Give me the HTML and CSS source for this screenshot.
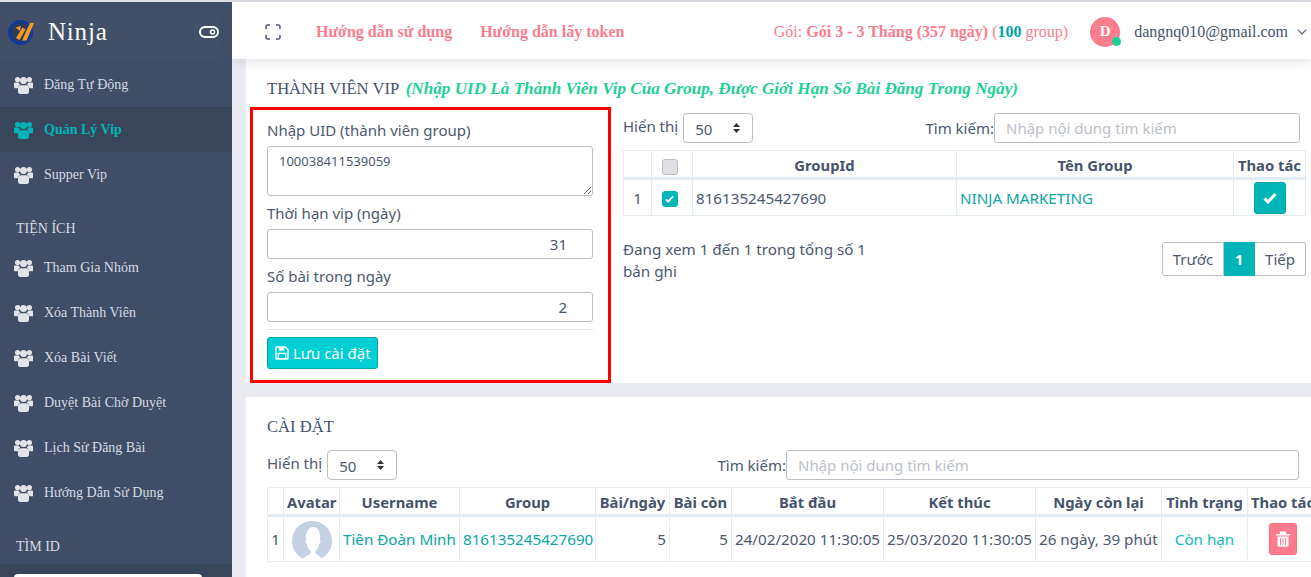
FILE: index.html
```html
<!DOCTYPE html>
<html lang="en">
<head>
    <meta charset="UTF-8">
    <meta name="viewport" content="width=device-width, initial-scale=1.0">
    <title>Ninja - Quản Lý Vip</title>
    <link rel="stylesheet" href="styles.css">
</head>
<body>
    <svg class="defs" width="0" height="0">
        <symbol id="users" viewBox="0 0 19 18">
            <circle cx="3.6" cy="3.6" r="2.6"/>
            <circle cx="15.4" cy="3.6" r="2.6"/>
            <circle cx="9.5" cy="4.4" r="3.5"/>
            <path d="M0 7.6c0-.7.6-1 1.3-1h3.4c.4.9 1 1.6 1.6 2.2-1.3.6-2.2 1.8-2.4 3.5H1.3C.5 12.300 0 11.800 0 11z"/>
            <path d="M19 7.600c0-.7-.6-1-1.300-1h-3.400c-.4.9-1 1.600-1.600 2.200 1.300.6 2.200 1.800 2.400 3.500h3.600c.8 0 1.300-.5 1.300-1.300z"/>
            <path d="M6.800 9.200h5.400c1.800 0 2.800 1.300 2.800 3.100v3.500c0 1.300-.9 2.200-2.200 2.200H6.200C4.900 18 4 17.100 4 15.800v-3.500c0-1.800 1-3.100 2.800-3.100z"/>
        </symbol>
        <symbol id="check" viewBox="0 0 14 12">
            <path d="M1.500 6.500 5 10l7.500-8" fill="none" stroke="currentColor" stroke-width="3"/>
        </symbol>
    </svg>

    <aside class="sidebar">
        <div class="brand">
            <svg class="logo" width="26" height="26" viewBox="0 0 26 26">
                <circle cx="12.500" cy="13.500" r="11" fill="#2c3a5c" stroke="#12389a" stroke-width="3"/>
                <path d="M8 19 14.500 8.500l3 2L11.500 21zM14 21.500 22 4h4l-7.500 17.500z" fill="#f59a23"/>
                <path d="M7.500 8.500l5.500-1.500-1 5z" fill="#f59a23"/>
            </svg>
            <span class="brand-name">Ninja</span>
            <svg class="toggle" width="20" height="14" viewBox="0 0 20 14">
                <rect x="1" y="2" width="18" height="10" rx="5" fill="none" stroke="#fff" stroke-width="2"/>
                <circle cx="13.500" cy="7" r="2" fill="none" stroke="#fff" stroke-width="1.600"/>
            </svg>
        </div>

        <a class="nav-item"><svg class="nav-icon"><use href="#users"/></svg>Đăng Tự Động</a>
        <a class="nav-item active"><svg class="nav-icon"><use href="#users"/></svg>Quản Lý Vip</a>
        <a class="nav-item"><svg class="nav-icon"><use href="#users"/></svg>Supper Vip</a>

        <div class="nav-title first">TIỆN ÍCH</div>
        <a class="nav-item"><svg class="nav-icon"><use href="#users"/></svg>Tham Gia Nhóm</a>
        <a class="nav-item"><svg class="nav-icon"><use href="#users"/></svg>Xóa Thành Viên</a>
        <a class="nav-item"><svg class="nav-icon"><use href="#users"/></svg>Xóa Bài Viết</a>
        <a class="nav-item"><svg class="nav-icon"><use href="#users"/></svg>Duyệt Bài Chờ Duyệt</a>
        <a class="nav-item"><svg class="nav-icon"><use href="#users"/></svg>Lịch Sử Đăng Bài</a>
        <a class="nav-item"><svg class="nav-icon"><use href="#users"/></svg>Hướng Dẫn Sử Dụng</a>

        <div class="nav-title">TÌM ID</div>
        <div class="find-box"><div class="find-input"></div></div>
    </aside>

    <div class="main">
        <header class="topbar">
            <svg class="fullscreen" width="16" height="16" viewBox="0 0 16 16">
                <path d="M1 5V2.500C1 1.600 1.600 1 2.500 1H5M11 1h2.500c.9 0 1.500.6 1.500 1.500V5M15 11v2.500c0 .9-.6 1.500-1.500 1.500H11M5 15H2.500C1.600 15 1 14.400 1 13.500V11" fill="none" stroke="#4a5870" stroke-width="1.500"/>
            </svg>
            <a class="top-link">Hướng dẫn sử dụng</a>
            <a class="top-link">Hướng dẫn lấy token</a>
            <div class="plan">Gói: <b>Gói 3 - 3 Tháng (357 ngày)</b> (<b class="plan-count">100</b> group)</div>
            <div class="avatar">D<span class="avatar-dot"></span></div>
            <div class="email">dangnq010@gmail.com</div>
            <svg class="chevron" width="10" height="6" viewBox="0 0 10 6">
                <path d="M.7.7 5 5 9.300.7" fill="none" stroke="#4a5870" stroke-width="1.100"/>
            </svg>
        </header>

        <section class="card card-vip">
            <h2 class="card-title">THÀNH VIÊN VIP <em>(Nhập UID Là Thành Viên Vip Của Group, Được Giới Hạn Số Bài Đăng Trong Ngày)</em></h2>
            <div class="vip-row">
                <form class="vip-form">
                    <label>Nhập UID (thành viên group)</label>
                    <textarea class="uid-input">100038411539059</textarea>
                    <label>Thời hạn vip (ngày)</label>
                    <input class="num-input" type="text" value="31">
                    <label>Số bài trong ngày</label>
                    <input class="num-input" type="text" value="2">
                    <hr>
                    <button class="save-btn" type="button">
                        <svg width="14" height="14" viewBox="0 0 15 15">
                            <path d="M2 1h9l3 3v9a1 1 0 0 1-1 1H2a1 1 0 0 1-1-1V2a1 1 0 0 1 1-1z" fill="none" stroke="#fff" stroke-width="1.500"/>
                            <path d="M4 1.500h6v3.500H4z" fill="#fff"/>
                            <path d="M3.500 8h8v5.500h-8z" fill="none" stroke="#fff" stroke-width="1.300"/>
                        </svg>
                        Lưu cài đặt
                    </button>
                </form>

                <div class="vip-list">
                    <div class="filter-row">
                        <label class="filter-label">Hiển thị</label>
                        <select class="page-size"><option>50</option></select>
                        <label class="search-label">Tìm kiếm:</label>
                        <input class="search vip-search" type="text" placeholder="Nhập nội dung tìm kiếm">
                    </div>
                    <table class="grid grid-groups">
                        <thead>
                            <tr>
                                <th class="g-no"></th>
                                <th class="g-check"><span class="checkbox"></span></th>
                                <th class="g-id">GroupId</th>
                                <th class="g-name">Tên Group</th>
                                <th class="g-act">Thao tác</th>
                            </tr>
                        </thead>
                        <tbody>
                            <tr>
                                <td class="center">1</td>
                                <td class="center"><span class="checkbox checked"><svg width="9" height="8"><use href="#check"/></svg></span></td>
                                <td>816135245427690</td>
                                <td><a class="link">NINJA MARKETING</a></td>
                                <td class="center"><span class="icon-btn teal"><svg width="14" height="12"><use href="#check"/></svg></span></td>
                            </tr>
                        </tbody>
                    </table>
                    <div class="list-foot">
                        <div class="info">Đang xem 1 đến 1 trong tổng số 1 bản ghi</div>
                        <div class="pager">
                            <a>Trước</a>
                            <a class="current">1</a>
                            <a>Tiếp</a>
                        </div>
                    </div>
                </div>
            </div>
        </section>

        <section class="card card-settings">
            <h2 class="card-title">CÀI ĐẶT</h2>
            <div class="filter-row">
                <label class="filter-label">Hiển thị</label>
                <select class="page-size"><option>50</option></select>
                <label class="search-label">Tìm kiếm:</label>
                <input class="search settings-search" type="text" placeholder="Nhập nội dung tìm kiếm">
            </div>
            <table class="grid grid-settings">
                <thead>
                    <tr>
                        <th class="s-no"></th>
                        <th class="s-avatar">Avatar</th>
                        <th class="s-user">Username</th>
                        <th class="s-group">Group</th>
                        <th class="s-day">Bài/ngày</th>
                        <th class="s-left">Bài còn</th>
                        <th class="s-start">Bắt đầu</th>
                        <th class="s-end">Kết thúc</th>
                        <th class="s-remain">Ngày còn lại</th>
                        <th class="s-state">Tình trạng</th>
                        <th class="s-act">Thao tác</th>
                    </tr>
                </thead>
                <tbody>
                    <tr>
                        <td class="center">1</td>
                        <td class="center">
                            <svg class="user-pic" width="40" height="37" viewBox="0 0 40 37">
                                <path d="M10 37C3.500 33 0 27 0 20 0 9 9 0 20 0s20 9 20 20c0 7-3.500 13-10 17z" fill="#c6d0e3"/>
                                <path d="M12 37c3-3 6-3 7-6-1-2-4-4-4-8-2-1-2-3-1-4-1-6 2-13 7-13 5-.5 8 6 7 13 1 1 1 3-1 4 0 4-3 6-4 8 1 3 4 3 6 6z" fill="#fff"/>
                            </svg>
                        </td>
                        <td class="nowrap"><a class="link">Tiên Đoàn Minh</a></td>
                        <td class="nowrap"><a class="link">816135245427690</a></td>
                        <td class="right">5</td>
                        <td class="right">5</td>
                        <td class="nowrap">24/02/2020 11:30:05</td>
                        <td class="nowrap">25/03/2020 11:30:05</td>
                        <td class="nowrap">26 ngày, 39 phút</td>
                        <td class="center state">Còn hạn</td>
                        <td class="center">
                            <span class="icon-btn pink">
                                <svg width="14" height="16" viewBox="0 0 14 16">
                                    <path d="M0 3h14v1.500H0zM4.500 3V1h5v2" fill="#fff"/>
                                    <path d="M4.500 3V1.200h5V3" fill="none" stroke="#fff" stroke-width="1.300"/>
                                    <path d="M1.500 5.500h11V14c0 1-.6 1.700-1.500 1.700H3c-.9 0-1.500-.7-1.500-1.700z" fill="#fff"/>
                                    <path d="M4.500 7v7M7 7v7M9.500 7v7" stroke="#fd7b8c"/>
                                </svg>
                            </span>
                        </td>
                    </tr>
                </tbody>
            </table>
        </section>
    </div>
</body>
</html>
```

FILE: styles.css
```css
* {
    box-sizing: border-box;
}
html, body {
    height: 577px;
    overflow: hidden;
}
body {
    margin: 0;
    padding-top: 2px;
    display: flex;
    background: #e9ebf0;
    font-family: "Noto Sans", "Open Sans", sans-serif;
    font-size: 15px;
    color: #4c5870;
    box-shadow: inset 0 2px 0 #dfe1e5;
}
.defs {
    position: absolute;
}

/* sidebar */
.sidebar {
    flex: 0 0 232px;
    height: 575px;
    background: #3f4d67;
    font-family: "Liberation Serif", serif;
    overflow: hidden;
}
.brand {
    height: 60px;
    display: flex;
    align-items: center;
    padding: 0 13px 0 8px;
    background: #414f69;
}
.brand-name {
    margin-left: 14px;
    font-size: 25px;
    letter-spacing: 0.8px;
    color: #fff;
}
.toggle {
    margin-left: auto;
}
.nav-item {
    display: flex;
    align-items: center;
    height: 45px;
    padding-left: 14px;
    font-size: 14px;
    color: #d7dbe2;
}
.nav-item.active {
    background: #394659;
    color: #00b5b8;
    font-weight: bold;
}
.nav-icon {
    width: 19px;
    height: 18px;
    margin-right: 11px;
    fill: #e3e4e8;
}
.active .nav-icon {
    fill: #00b5b8;
}
.nav-title {
    margin-top: 24px;
    padding-left: 16px;
    font-size: 14px;
    line-height: 16px;
    color: #d7dbe2;
}
.nav-title.first {
    margin-top: 24px;
    margin-bottom: 8px;
}
.find-box {
    margin-top: 9px;
    height: 30px;
    padding: 10px 30px 0 14px;
    background: #394659;
}
.find-input {
    height: 20px;
    background: #fff;
    border-radius: 4px;
}

/* main column */
.main {
    flex: 1;
    min-width: 0;
}
.topbar {
    position: relative;
    display: flex;
    align-items: center;
    height: 57px;
    padding: 2px 4px 0 33px;
    background: #fff;
    box-shadow: 0 1px 12px rgba(60, 70, 90, 0.18);
    font-family: "Liberation Serif", serif;
}
.top-link {
    margin-left: 28px;
    font-size: 16px;
    font-weight: bold;
    color: #fb7d8e;
}
.fullscreen + .top-link {
    margin-left: 35px;
}
.plan {
    margin-left: auto;
    font-size: 16px;
    color: #fb7d8e;
}
.plan-count {
    color: #00a5a8;
}
.avatar {
    position: relative;
    display: flex;
    align-items: center;
    justify-content: center;
    width: 30px;
    height: 30px;
    margin-left: 22px;
    border-radius: 50%;
    background: #fb7d8e;
    color: #fff;
    font-size: 15px;
    font-weight: bold;
}
.avatar-dot {
    position: absolute;
    right: -1px;
    bottom: 1px;
    width: 9px;
    height: 9px;
    border-radius: 50%;
    background: #1dd195;
}
.email {
    margin-left: 14px;
    font-size: 16px;
    color: #46536c;
}
.chevron {
    margin-left: 9px;
}

.card {
    background: #fff;
    margin-left: 14px;
    padding-left: 21px;
}
.card-title {
    margin: 0;
    font-family: "Liberation Serif", serif;
    font-size: 16.600px;
    font-weight: normal;
    line-height: 22px;
    color: #46536c;
}
.card-title em {
    margin-left: 3px;
    font-size: 17.140px;
    font-weight: bold;
    color: #1dd195;
}
.card-vip {
    height: 324px;
    padding-top: 19px;
    padding-left: 4px;
    overflow: hidden;
}
.card-vip .card-title {
    margin-left: 17px;
    margin-bottom: 7px;
}
.vip-row {
    display: flex;
    gap: 12px;
}

/* form in the red frame */
.vip-form {
    flex: 0 0 361px;
    height: 276px;
    padding: 11px 15px 0 14px;
    border: 3px solid #f00;
}
.vip-form label {
    display: block;
    height: 25px;
    line-height: 18px;
}
.uid-input {
    display: block;
    width: 100%;
    height: 50px;
    margin-bottom: 8px;
    padding: 5px 11px;
    border: 1px solid #babfc7;
    border-radius: 3px;
    font-family: inherit;
    font-size: 13px;
    line-height: 18px;
    color: #4c5870;
}
.num-input {
    display: block;
    width: 100%;
    height: 30px;
    margin-bottom: 8px;
    padding: 0 25px;
    border: 1px solid #babfc7;
    border-radius: 3px;
    font-family: inherit;
    font-size: 15px;
    text-align: right;
    color: #4c5870;
}
.vip-form hr {
    margin: -1px 0 7px;
    border: 0;
    border-top: 1px solid #e4e5e8;
}
.save-btn {
    display: flex;
    align-items: center;
    gap: 4px;
    height: 32px;
    padding: 0 6px 0 7px;
    background: #00cfd5;
    border: 1px solid #00a5a8;
    border-radius: 3px;
    font-family: inherit;
    font-size: 15px;
    color: #fff;
}

/* lists */
.vip-list {
    flex: 0 0 682px;
    padding-top: 6px;
}
.filter-row {
    display: flex;
    align-items: center;
    margin-bottom: 7px;
}
.filter-label {
    margin-bottom: 4px;
    white-space: nowrap;
}
.page-size {
    appearance: none;
    width: 70px;
    height: 30px;
    margin-left: 5px;
    padding: 2px 0 0 11px;
    background: #fff url("data:image/svg+xml,%3Csvg xmlns='http://www.w3.org/2000/svg' width='9' height='12'%3E%3Cpath d='M4.500 1 8 5H1zM4.500 11 1 7h7z' fill='%23333'/%3E%3C/svg%3E") no-repeat right 11px center;
    border: 1px solid #babfc7;
    border-radius: 4px;
    font-family: inherit;
    font-size: 15px;
    color: #4c5870;
}
.search-label {
    margin-left: auto;
    white-space: nowrap;
}
.search {
    height: 30px;
    padding: 0 11px;
    border: 1px solid #babfc7;
    border-radius: 3px;
    font-family: inherit;
    font-size: 15px;
}
.search::placeholder {
    color: #bcc0c8;
}
.vip-search {
    width: 306px;
    margin-right: 6px;
}
.settings-search {
    width: 513px;
    margin-right: 12px;
}
.grid {
    table-layout: fixed;
    border-collapse: collapse;
}
.grid th,
.grid td {
    border: 1px solid #e3ebf3;
    padding: 0 3px;
    font-size: 15.200px;
}
.grid th {
    height: 28px;
    padding-top: 2px;
    border-bottom: 3px solid #e3ebf3;
    font-size: 14.800px;
    font-weight: bold;
    text-align: center;
    color: #46536c;
    white-space: nowrap;
}
.grid-groups {
    width: 682px;
}
.grid-groups td {
    height: 37px;
}
.g-no { width: 28px; }
.g-check { width: 41px; }
.g-id { width: 264px; }
.g-name { width: 277px; }
.g-act { width: 72px; }
.grid-settings {
    width: 1050px;
}
.grid-settings td {
    height: 46px;
}
.s-no { width: 16px; }
.s-avatar { width: 56px; }
.s-user { width: 120px; }
.s-group { width: 136px; }
.s-day { width: 74px; }
.s-left { width: 62px; }
.s-start { width: 152px; }
.s-end { width: 152px; }
.s-remain { width: 126px; }
.s-state { width: 86px; }
.s-act { width: 70px; }
.center { text-align: center; }
.right { text-align: right; }
.nowrap { white-space: nowrap; }
.link {
    color: #0aa5a5;
}
.state {
    color: #10bcbc;
}
.user-pic {
    display: block;
    margin: 0 auto;
}
.checkbox {
    display: inline-flex;
    align-items: center;
    justify-content: center;
    width: 16px;
    height: 16px;
    margin-right: 5px;
    vertical-align: middle;
    background: #dfe0e3;
    border: 1px solid #babfc7;
    border-radius: 3px;
}
.checkbox.checked {
    background: #00b5b8;
    border-color: #00b5b8;
    color: #fff;
}
.icon-btn {
    display: inline-flex;
    align-items: center;
    justify-content: center;
    vertical-align: middle;
    width: 32px;
    height: 32px;
    border-radius: 3px;
    color: #fff;
}
.icon-btn.teal {
    background: #00b5b8;
    border: 1px solid #00a5a8;
}
.icon-btn.pink {
    width: 28px;
    background: #fd7b8c;
    border: 1px solid #fc6a7d;
}
.list-foot {
    display: flex;
    justify-content: space-between;
    margin-top: 22px;
}
.info {
    width: 250px;
    line-height: 22px;
    font-size: 15.200px;
}
.pager {
    display: flex;
    height: 34px;
    margin-top: 4px;
    line-height: 32px;
}
.pager a {
    padding: 0 10px;
    border: 1px solid #babfc7;
    border-left: 0;
    font-size: 15px;
}
.pager a:first-child {
    border-left: 1px solid #babfc7;
    border-radius: 3px 0 0 3px;
}
.pager a:last-child {
    border-radius: 0 3px 3px 0;
}
.pager .current {
    padding: 0;
    width: 31px;
    text-align: center;
    background: #00b5b8;
    border-color: #00b5b8;
    color: #fff;
    font-weight: bold;
}
.card-settings {
    margin-top: 14px;
    height: 200px;
    padding-top: 19px;
}
.card-settings .card-title {
    margin-bottom: 12px;
}
```
